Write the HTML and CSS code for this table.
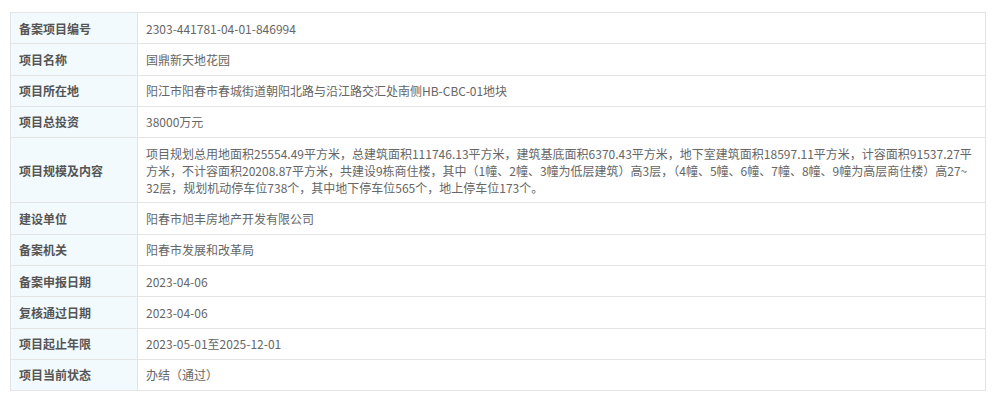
FILE: index.html
```html
<!DOCTYPE html>
<html lang="zh-CN">
<head>
  <meta charset="UTF-8" />
  <title>项目备案信息</title>
  <link rel="stylesheet" href="styles.css">
</head>
<body>

<div class="wrap">
  <table class="info-table">
    <tr>
      <th>备案项目编号</th>
      <td>2303-441781-04-01-846994</td>
    </tr>
    <tr>
      <th>项目名称</th>
      <td>国鼎新天地花园</td>
    </tr>
    <tr>
      <th>项目所在地</th>
      <td>阳江市阳春市春城街道朝阳北路与沿江路交汇处南侧HB-CBC-01地块</td>
    </tr>
    <tr>
      <th>项目总投资</th>
      <td>38000万元</td>
    </tr>
    <tr>
      <th>项目规模及内容</th>
      <td>项目规划总用地面积25554.49平方米，总建筑面积111746.13平方米，建筑基底面积6370.43平方米，地下室建筑面积18597.11平方米，计容面积91537.27平方米，不计容面积20208.87平方米，共建设9栋商住楼，其中（1幢、2幢、3幢为低层建筑）高3层，（4幢、5幢、6幢、7幢、8幢、9幢为高层商住楼）高27~<wbr>32层，规划机动停车位738个，其中地下停车位565个，地上停车位173个。</td>
    </tr>
    <tr>
      <th>建设单位</th>
      <td>阳春市旭丰房地产开发有限公司</td>
    </tr>
    <tr>
      <th>备案机关</th>
      <td>阳春市发展和改革局</td>
    </tr>
    <tr>
      <th>备案申报日期</th>
      <td>2023-04-06</td>
    </tr>
    <tr>
      <th>复核通过日期</th>
      <td>2023-04-06</td>
    </tr>
    <tr>
      <th>项目起止年限</th>
      <td>2023-05-01至2025-12-01</td>
    </tr>
    <tr>
      <th>项目当前状态</th>
      <td>办结（通过）</td>
    </tr>
  </table>
</div>

</body>
</html>
```

FILE: styles.css
```css
body {
  margin: 0;
  background: #fff;
  font-family: "Noto Sans CJK SC", "Noto Sans", sans-serif;
  font-size: 12px;
  color: #666;
}
.wrap {
  padding: 12px 14px 0 10px;
}
.info-table {
  width: 976px;
  border-collapse: collapse;
  border: 1px solid #e4e4e4;
}
.info-table th,
.info-table td {
  border: 1px solid #e4e4e4;
  padding: 6.65px 8px;
  line-height: 17px;
  text-align: left;
  vertical-align: middle;
}
.info-table th {
  width: 110px;
  background: #f3fafd;
  color: #555;
  font-weight: bold;
  white-space: nowrap;
}
.info-table td {
  color: #666;
}
```
